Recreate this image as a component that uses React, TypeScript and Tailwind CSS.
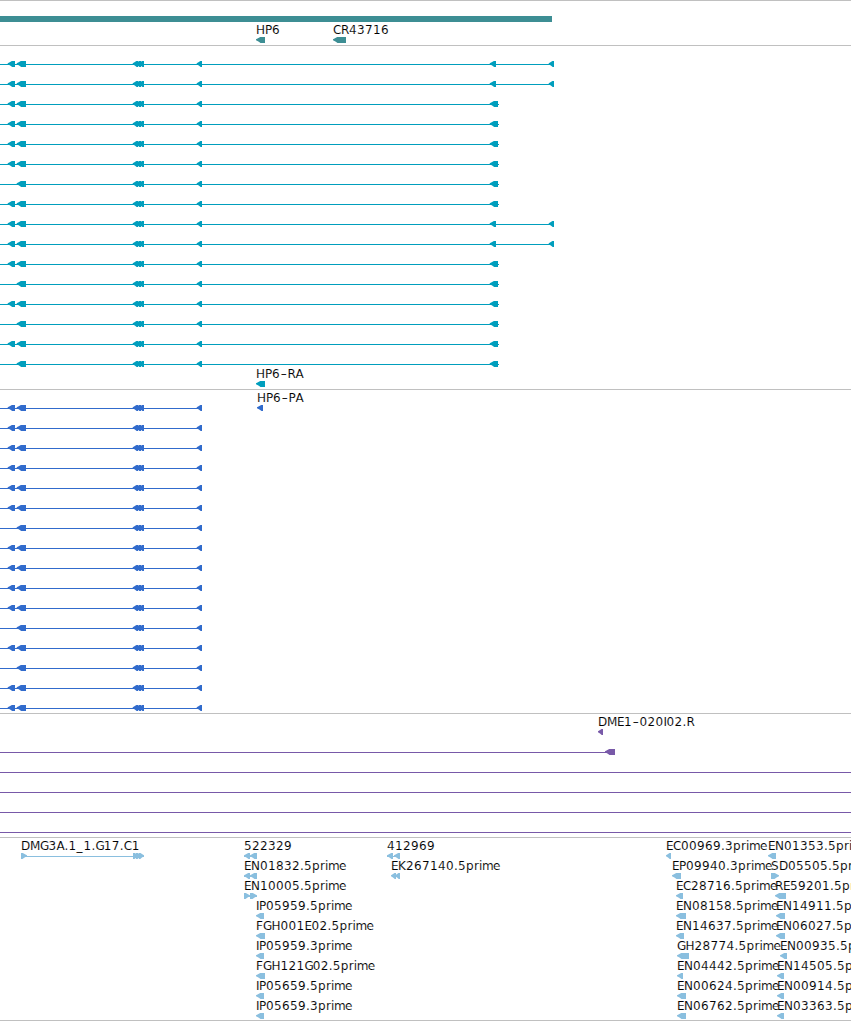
import { memo } from 'react'

type Span = [number, number]

interface Feature {
  row: number
  spans: Span[]
  label?: string
  line?: Span
  forward?: boolean
}

interface TrackProps {
  height: number
  color: string
  // y of the top edge of the first row of glyphs
  top: number
  features: Feature[]
}

const WIDTH = 851
const ROW = 20
const GLYPH = 6

const ADVANCE: Record<string, number> = {
  A: 8, C: 8, D: 9, E: 7, F: 7, G: 8.4, H: 9, I: 3, K: 8, M: 10, N: 9, P: 7, R: 8, S: 8,
  p: 8, r: 5, i: 3, m: 11, e: 6.8, '.': 4, '–': 7.6, _: 7,
}

function charPositions(text: string, start: number) {
  let x = start
  return text
    .split('')
    .map((c) => {
      const at = c === '–' ? x + 0.8 : x
      x += ADVANCE[c] ?? 8
      return at
    })
    .join(' ')
}

function arrowPoints([a, b]: Span, y: number, forward?: boolean) {
  const tip = Math.min(b - a, 6)
  const dir = forward ? -1 : 1
  const head = forward ? b : a
  const tail = forward ? a : b
  const points = [
    [tail, y],
    [head + dir * tip * 0.7, y],
    [head + dir * tip * 0.25, y + 1.5],
    [head, y + 2.2],
    [head, y + 3.2],
    [head + dir * tip * 0.4, y + 4.4],
    [head + dir * tip * 0.75, y + GLYPH],
    [tail, y + GLYPH],
  ]
  return points.map((p) => p.join(',')).join(' ')
}

function Label({ text, x, y }: { text: string; x: number; y: number }) {
  return (
    <text x={charPositions(text, x)} y={y} fontSize={12} fill="#000" stroke="#fff" strokeWidth={0.1}>
      {text}
    </text>
  )
}

const Track = memo(function Track({ height, color, top, features }: TrackProps) {
  return (
    <section className="border-t border-[#c0c0c0]">
      <svg className="block" width={WIDTH} height={height} viewBox={`0 0 ${WIDTH} ${height}`}>
        {features.map((f, i) => {
          const y = top + f.row * ROW
          return (
            <g key={i} fill={color}>
              {f.line && <rect x={f.line[0]} y={y + 3} width={f.line[1] - f.line[0]} height={1} />}
              {f.spans.map((s, j) => (
                <polygon key={j} points={arrowPoints(s, y, f.forward)} />
              ))}
              {f.label && <Label text={f.label} x={f.spans[0][0]} y={y - 3} />}
            </g>
          )
        })}
      </svg>
    </section>
  )
})

const rows = Array.from({ length: 16 }, (_, i) => i)

const TRIPLE: Span[] = [[132.7, 138], [135, 141], [138, 144]]

const commonExons = (short: boolean): Span[] => [
  ...(short ? [] : ([[7.7, 15]] as Span[])),
  [16.7, 26],
  ...TRIPLE,
  [196.7, 202],
]

const genes: Feature[] = [
  { row: 0, spans: [[256, 265]], label: 'HP6' },
  { row: 0, spans: [[333, 346]], label: 'CR43716' },
]

const transcripts: Feature[] = [
  ...rows.map((row): Feature => {
    const long = [0, 1, 8, 9].includes(row)
    const tail: Span[] = long ? [[489.7, 496], [548.7, 554]] : [[489.7, 498]]
    return {
      row,
      line: [0, long ? 554 : 499],
      spans: [...commonExons([6, 11, 13, 15].includes(row)), ...tail],
    }
  }),
  { row: 16, spans: [[256, 265]], label: 'HP6–RA' },
]

const proteins: Feature[] = [
  ...rows.map((row): Feature => ({
    row,
    line: [0, 202],
    spans: commonExons([6, 11, 13].includes(row)),
  })),
  { row: 0, spans: [[257, 263]], label: 'HP6–PA' },
]

const bacs: Feature[] = [
  { row: 0, spans: [[598, 603]], label: 'DME1–020I02.R' },
  { row: 1, spans: [[605, 615]], line: [0, 615] },
  { row: 2, spans: [], line: [0, WIDTH] },
  { row: 3, spans: [], line: [0, WIDTH] },
  { row: 4, spans: [], line: [0, WIDTH] },
  { row: 5, spans: [], line: [0, WIDTH] },
]

const ests: Feature[] = [
  { row: 0, spans: [[21, 27], [133, 139], [136, 142], [139, 144]], line: [21, 144], label: 'DMG3A.1_1.G17.C1', forward: true },
  { row: 0, spans: [[244, 250], [250, 257]], line: [244, 257], label: '522329' },
  { row: 1, spans: [[244, 250], [250, 257]], line: [244, 257], label: 'EN01832.5prime' },
  { row: 2, spans: [[244, 250], [250, 257]], line: [244, 257], label: 'EN10005.5prime', forward: true },
  { row: 3, spans: [[256, 264]], label: 'IP05959.5prime' },
  { row: 4, spans: [[256, 265]], label: 'FGH001E02.5prime' },
  { row: 5, spans: [[256, 264]], label: 'IP05959.3prime' },
  { row: 6, spans: [[256, 265]], label: 'FGH121G02.5prime' },
  { row: 7, spans: [[256, 264]], label: 'IP05659.5prime' },
  { row: 8, spans: [[256, 264]], label: 'IP05659.3prime' },
  { row: 0, spans: [[387, 393], [394, 400]], line: [387, 400], label: '412969' },
  { row: 1, spans: [[391, 396], [395, 400]], label: 'EK267140.5prime' },
  { row: 0, spans: [[666, 671]], label: 'EC00969.3prime' },
  { row: 1, spans: [[672, 681]], label: 'EP09940.3prime' },
  { row: 2, spans: [[676, 683]], label: 'EC28716.5prime' },
  { row: 3, spans: [[676, 686]], label: 'EN08158.5prime' },
  { row: 4, spans: [[676, 684]], label: 'EN14637.5prime' },
  { row: 5, spans: [[677, 689]], label: 'GH28774.5prime' },
  { row: 6, spans: [[677, 683]], label: 'EN04442.5prime' },
  { row: 7, spans: [[677, 686]], label: 'EN00624.5prime' },
  { row: 8, spans: [[677, 686]], label: 'EN06762.5prime' },
  { row: 0, spans: [[768, 776]], label: 'EN01353.5prime' },
  { row: 1, spans: [[771, 779]], label: 'SD05505.5prime', forward: true },
  { row: 2, spans: [[775, 786]], label: 'RE59201.5prime' },
  { row: 3, spans: [[776, 785]], label: 'EN14911.5prime' },
  { row: 4, spans: [[776, 785]], label: 'EN06027.5prime' },
  { row: 5, spans: [[780, 787]], label: 'EN00935.5prime' },
  { row: 6, spans: [[777, 784]], label: 'EN14505.5prime' },
  { row: 7, spans: [[777, 784]], label: 'EN00914.5prime' },
  { row: 8, spans: [[777, 784]], label: 'EN03363.5prime' },
]

export default function App() {
  return (
    <main className="w-[851px] overflow-hidden border-b border-[#c0c0c0] bg-white font-['DejaVu_Sans',sans-serif]">
      <div className="border-t border-[#c0c0c0] pt-[15px]">
        <div className="h-1.5 w-[552px] bg-[#3d8e94]" />
      </div>
      <div className="-mt-px h-6 overflow-hidden">
        <svg className="block" width={WIDTH} height={24}>
          {genes.map((g) => (
            <g key={g.label}>
              <polygon fill="#3d8e94" points={arrowPoints(g.spans[0], 16)} />
              <Label text={g.label ?? ''} x={g.spans[0][0]} y={13} />
            </g>
          ))}
        </svg>
      </div>
      <Track height={343} color="#009ebd" top={15} features={transcripts} />
      <Track height={323} color="#316bcc" top={15} features={proteins} />
      <Track height={123} color="#7859a8" top={15} features={bacs} />
      <Track height={182} color="#8abfdf" top={15} features={ests} />
    </main>
  )
}
